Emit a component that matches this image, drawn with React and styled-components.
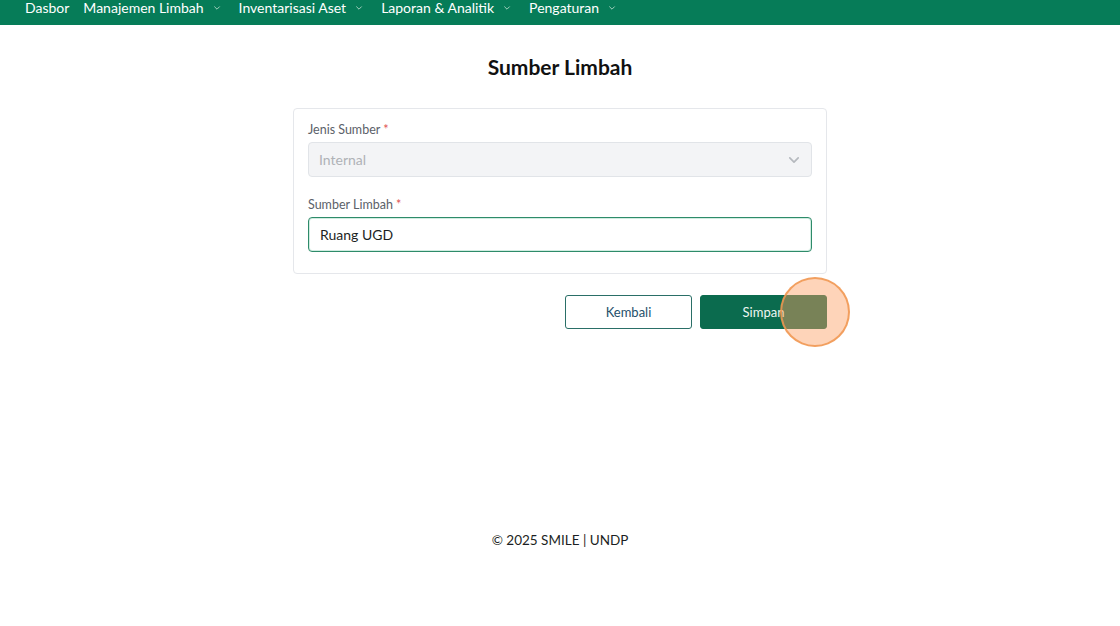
import React from "react";
import styled, { createGlobalStyle } from "styled-components";

const Global = createGlobalStyle`
  html, body { margin: 0; padding: 0; background: #fff; }
  body { font-family: Lato, "Noto Sans", sans-serif; color: #1f2328; }
  * { box-sizing: border-box; }
`;

const Page = styled.div`
  width: 1120px;
  min-height: 626px;
  display: flex;
  flex-direction: column;
  align-items: center;
`;

const NavBar = styled.nav`
  width: 100%;
  height: 25px;
  background: #067c58;
  display: flex;
  align-items: flex-start;
  padding: 0 0 0 25px;
  gap: 14px;
`;

const NavItem = styled.div`
  display: flex;
  align-items: center;
  gap: 9px;
  color: #fff;
  font-size: 14px;
  line-height: 15px;
  white-space: nowrap;
  margin-right: ${(p) => (p.$dd ? "4px" : "0")};
`;

const Chevron = ({ color = "#a8d3c1", size = 8 }) => (
  <svg width={size} height={size} viewBox="0 0 10 10" fill="none">
    <path d="M2 3.5 L5 6.5 L8 3.5" stroke={color} strokeWidth="1.2" strokeLinecap="round" strokeLinejoin="round" />
  </svg>
);

const Title = styled.h1`
  margin: 29px 0 0;
  font-size: 21px;
  line-height: 26px;
  font-weight: 700;
  color: #111;
`;

const Card = styled.div`
  margin-top: 28px;
  width: 534px;
  border: 1px solid #e5e7eb;
  border-radius: 4px;
  padding: 13px 14px 21px;
  display: flex;
  flex-direction: column;
  gap: 20px;
`;

const Field = styled.div`
  display: flex;
  flex-direction: column;
  gap: 5px;
`;

const Label = styled.label`
  font-size: 12.5px;
  line-height: 15px;
  color: #5b6169;
  span { color: #e05252; }
`;

const SelectBox = styled.div`
  height: 35px;
  border: 1px solid #e1e4e8;
  border-radius: 4px;
  background: #f3f4f6;
  display: flex;
  align-items: center;
  justify-content: space-between;
  padding: 0 10px 0 10px;
  font-size: 14px;
  color: #afb2b7;
`;

const Input = styled.div`
  height: 35px;
  border: 1.5px solid #2e8b6a;
  border-radius: 4px;
  background: #fff;
  display: flex;
  align-items: center;
  padding: 0 11px;
  font-size: 14px;
  color: #1c1f23;
  box-shadow: inset 0 0 0 1px rgba(120, 200, 170, 0.35);
`;

const Actions = styled.div`
  width: 534px;
  margin-top: 21px;
  display: flex;
  justify-content: flex-end;
  gap: 8px;
  position: relative;
`;

const Button = styled.button`
  width: 127px;
  height: 34px;
  border-radius: 3px;
  font-family: Lato, sans-serif;
  font-size: 13px;
  cursor: pointer;
  border: 1px solid ${(p) => (p.$primary ? "#0b6b4e" : "#2a6f67")};
  background: ${(p) => (p.$primary ? "#0b6b4e" : "#fff")};
  color: ${(p) => (p.$primary ? "#eef6f2" : "#24506a")};
`;

const ClickMark = styled.div`
  position: absolute;
  right: -23px;
  top: -18px;
  width: 70px;
  height: 70px;
  border-radius: 50%;
  border: 2px solid rgba(240, 150, 80, 0.85);
  background: rgba(252, 160, 100, 0.45);
  pointer-events: none;
`;

const Footer = styled.footer`
  margin-top: 202px;
  font-size: 13.5px;
  line-height: 18px;
  color: #1c1f23;
`;

const navItems = [
  { label: "Dasbor" },
  { label: "Manajemen Limbah", dd: true },
  { label: "Inventarisasi Aset", dd: true },
  { label: "Laporan & Analitik", dd: true },
  { label: "Pengaturan", dd: true },
];

export default function App() {
  return (
    <>
      <Global />
      <Page>
        <NavBar>
          {navItems.map((n) => (
            <NavItem key={n.label} $dd={n.dd}>
              {n.label}
              {n.dd && <Chevron />}
            </NavItem>
          ))}
        </NavBar>
        <Title>Sumber Limbah</Title>
        <Card>
          <Field>
            <Label>
              Jenis Sumber <span>*</span>
            </Label>
            <SelectBox>
              Internal
              <Chevron color="#b5b9be" size={14} />
            </SelectBox>
          </Field>
          <Field>
            <Label>
              Sumber Limbah <span>*</span>
            </Label>
            <Input>Ruang UGD</Input>
          </Field>
        </Card>
        <Actions>
          <Button>Kembali</Button>
          <Button $primary>Simpan</Button>
          <ClickMark />
        </Actions>
        <Footer>© 2025 SMILE | UNDP</Footer>
      </Page>
    </>
  );
}
